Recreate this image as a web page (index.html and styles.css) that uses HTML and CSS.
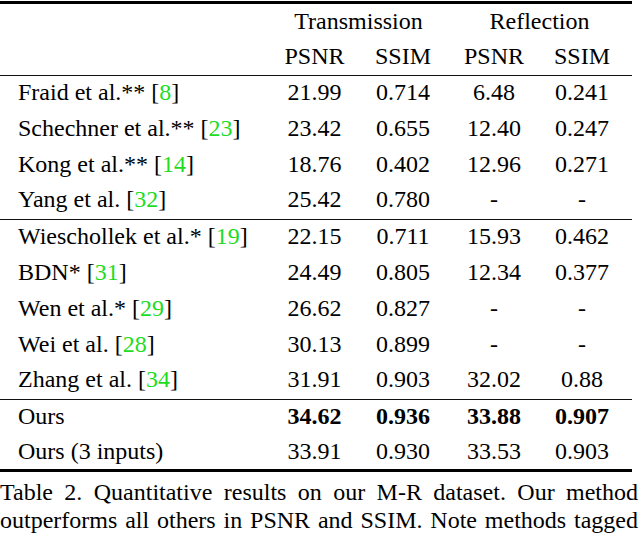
FILE: index.html
```html
<!DOCTYPE html>
<html>
<head>
<meta charset="utf-8">
<link rel="stylesheet" href="styles.css">
</head>
<body>
<div class="page">
  <table class="results">
    <colgroup>
      <col class="c-method">
      <col class="c-num1">
      <col class="c-num2">
      <col class="c-num3">
      <col class="c-num4">
    </colgroup>
    <thead>
      <tr class="head1">
        <th></th>
        <th colspan="2">Transmission</th>
        <th colspan="2">Reflection</th>
      </tr>
      <tr class="head2 rule">
        <th></th>
        <th>PSNR</th>
        <th>SSIM</th>
        <th>PSNR</th>
        <th class="last">SSIM</th>
      </tr>
    </thead>
    <tbody>
      <tr><td>Fraid et al.** [<span class="cite">8</span>]</td><td>21.99</td><td>0.714</td><td>6.48</td><td class="last">0.241</td></tr>
      <tr><td>Schechner et al.** [<span class="cite">23</span>]</td><td>23.42</td><td>0.655</td><td>12.40</td><td class="last">0.247</td></tr>
      <tr><td>Kong et al.** [<span class="cite">14</span>]</td><td>18.76</td><td>0.402</td><td>12.96</td><td class="last">0.271</td></tr>
      <tr class="rule"><td>Yang et al. [<span class="cite">32</span>]</td><td>25.42</td><td>0.780</td><td>-</td><td class="last">-</td></tr>
      <tr><td>Wieschollek et al.* [<span class="cite">19</span>]</td><td>22.15</td><td>0.711</td><td>15.93</td><td class="last">0.462</td></tr>
      <tr><td>BDN* [<span class="cite">31</span>]</td><td>24.49</td><td>0.805</td><td>12.34</td><td class="last">0.377</td></tr>
      <tr><td>Wen et al.* [<span class="cite">29</span>]</td><td>26.62</td><td>0.827</td><td>-</td><td class="last">-</td></tr>
      <tr><td>Wei et al. [<span class="cite">28</span>]</td><td>30.13</td><td>0.899</td><td>-</td><td class="last">-</td></tr>
      <tr class="rule"><td>Zhang et al. [<span class="cite">34</span>]</td><td>31.91</td><td>0.903</td><td>32.02</td><td class="last">0.88</td></tr>
      <tr class="best tight"><td>Ours</td><td>34.62</td><td>0.936</td><td>33.88</td><td class="last">0.907</td></tr>
      <tr class="tight"><td>Ours (3 inputs)</td><td>33.91</td><td>0.930</td><td>33.53</td><td class="last">0.903</td></tr>
    </tbody>
  </table>
  <p class="caption">Table 2. Quantitative results on our M-R dataset. Our method outperforms all others in PSNR and SSIM. Note methods tagged</p>
</div>
</body>
</html>
```

FILE: styles.css
```css
html, body {
  margin: 0;
  padding: 0;
  background: #fff;
}

body {
  width: 640px;
  height: 535px;
  overflow: hidden;
  font-family: "Liberation Serif", "Times New Roman", serif;
  font-size: 24px;
  color: #000;
}

.page {
  padding-top: 1px;
}

.results {
  width: 632px;
  table-layout: fixed;
  border-collapse: separate;
  border-spacing: 0;
  border-top: 3px solid #000;
  border-bottom: 3px solid #000;
}

.c-method { width: 270px; }
.c-num1 { width: 89px; }
.c-num2 { width: 88px; }
.c-num3 { width: 94px; }
.c-num4 { width: 91px; }

.results th,
.results td {
  padding: 0 0 2px 0;
  font-weight: normal;
  text-align: center;
  white-space: nowrap;
  line-height: 33.8px;
  vertical-align: baseline;
}

.results th {
  line-height: 33px;
}

.results .head1 th {
  padding-top: 1px;
}

.results td:first-child {
  text-align: left;
  padding-left: 18px;
}

.results .last {
  padding-right: 9px;
}

.results tr.rule th,
.results tr.rule td {
  border-bottom: 1px solid #111;
}

.results tr.tight td {
  line-height: 32.5px;
}

.results tr.best td {
  font-weight: bold;
}

.results tr.best td:first-child {
  font-weight: normal;
}

.cite {
  color: #1fdc1f;
}

.caption {
  margin: 6px 0 0 0;
  width: 638px;
  line-height: 28px;
  text-align: justify;
  text-align-last: justify;
}
```
